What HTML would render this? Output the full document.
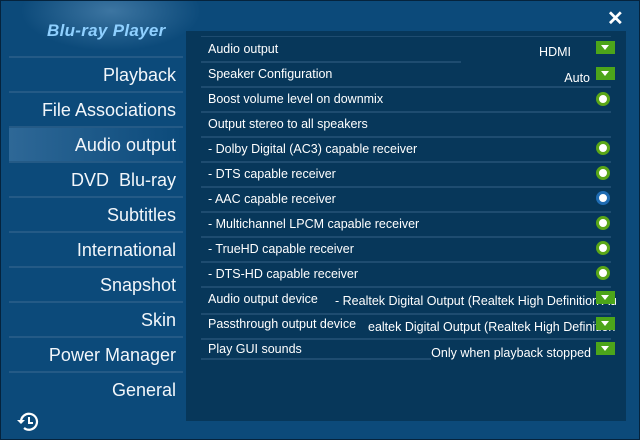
<!DOCTYPE html>
<html><head><style>
*{margin:0;padding:0;box-sizing:border-box}
body{width:640px;height:440px;background:#0c4a7a;font-family:"Liberation Sans",sans-serif;color:#fff;position:relative;overflow:hidden}
.win{position:absolute;left:0;top:0;width:640px;height:440px;border:1px solid #05233d;background:radial-gradient(ellipse 90px 40px at 110px 10px,rgba(120,170,210,.45),transparent),#0c4a7a}
.logo{position:absolute;left:46px;top:20px;font-size:17px;font-style:italic;font-weight:bold;color:#8fd0ff;letter-spacing:.3px}
.nav{position:absolute;left:8px;top:55px;width:174px}
.nav div{height:35px;border-top:2px solid #245a86;text-align:right;padding-right:7px;font-size:18px;line-height:34px;color:#f2f6fa}
.nav div.sel{background:linear-gradient(90deg,rgba(110,160,205,.35),rgba(60,120,170,.15) 75%,rgba(12,74,122,0))}
.panel{position:absolute;left:185px;top:30px;width:440px;height:390px;background:#07375a}
.row{position:absolute;left:15px;width:410px;height:25px;font-size:12.5px;line-height:22px;color:#fff}
.row .l{position:absolute;left:7px;top:0}
.row .r{position:absolute;right:40px;top:2px}
.sep{position:absolute;left:15px;width:410px;height:2px;background:#1e4c70}
.rad{position:absolute;left:410px;width:14px;height:14px;border-radius:50%;background:#fff;border:3px solid #5aa617}
.rad.b{border-color:#1f6cb3}
.dd{position:absolute;left:410px;width:19px;height:13px;background:#4ca51a}
.dd:after{content:"";position:absolute;left:5px;top:4px;border-left:4.5px solid transparent;border-right:4.5px solid transparent;border-top:5px solid #fff}
.close{position:absolute;left:606px;top:5px;font-size:20px;color:#fff;font-weight:bold}
</style></head><body><div class="win">
<div class="logo">Blu-ray Player</div>
<div class="close">✕</div>
<div class="nav">
<div>Playback</div><div>File Associations</div><div class="sel">Audio output</div><div>DVD&nbsp; Blu-ray</div><div>Subtitles</div><div>International</div><div>Snapshot</div><div>Skin</div><div>Power Manager</div><div>General</div>
</div>
<svg style="position:absolute;left:14px;top:409px" width="26" height="24" viewBox="0 0 26 24"><path d="M6 12a8 8 0 1 1 3 6" fill="none" stroke="#fff" stroke-width="2.2"/><path d="M2 10l4 4 4-4z" fill="#fff"/><path d="M14 7v6h4" fill="none" stroke="#fff" stroke-width="2"/></svg>
<div class="panel">
<div class="sep" style="top:5px;height:1px"></div>
<div class="row" style="top:7px"><span class="l">Audio output</span><span class="r" style="right:40px;top:3px">HDMI</span></div>
<div class="dd" style="top:10px"></div>
<div class="sep" style="top:30px;width:260px;left:15px"></div>
<div class="row" style="top:32px"><span class="l">Speaker Configuration</span><span class="r" style="right:21px;top:4px">Auto</span></div>
<div class="dd" style="top:36px"></div>
<div class="sep" style="top:55px"></div>
<div class="row" style="top:57px"><span class="l">Boost volume level on downmix</span></div>
<div class="rad" style="top:61px"></div>
<div class="sep" style="top:80px"></div>
<div class="row" style="top:82px"><span class="l">Output stereo to all speakers</span></div>
<div class="sep" style="top:105px"></div>
<div class="row" style="top:107px"><span class="l">- Dolby Digital (AC3) capable receiver</span></div>
<div class="rad" style="top:110px"></div>
<div class="sep" style="top:130px"></div>
<div class="row" style="top:132px"><span class="l">- DTS capable receiver</span></div>
<div class="rad" style="top:135px"></div>
<div class="sep" style="top:155px"></div>
<div class="row" style="top:157px"><span class="l">- AAC capable receiver</span></div>
<div class="rad b" style="top:160px"></div>
<div class="sep" style="top:180px"></div>
<div class="row" style="top:182px"><span class="l">- Multichannel LPCM capable receiver</span></div>
<div class="rad" style="top:185px"></div>
<div class="sep" style="top:205px"></div>
<div class="row" style="top:207px"><span class="l">- TrueHD capable receiver</span></div>
<div class="rad" style="top:210px"></div>
<div class="sep" style="top:230px"></div>
<div class="row" style="top:232px"><span class="l">- DTS-HD capable receiver</span></div>
<div class="rad" style="top:235px"></div>
<div class="sep" style="top:255px"></div>
<div class="row" style="top:257px;overflow:hidden;width:415px"><span class="l">Audio output device</span><span class="l" style="left:134px;top:2px;white-space:nowrap">- Realtek Digital Output (Realtek High Definition Audio)</span></div>
<div class="dd" style="top:260px"></div>
<div class="sep" style="top:282px"></div>
<div class="row" style="top:282px;overflow:hidden;width:415px"><span class="l">Passthrough output device</span><span class="l" style="left:167px;top:3px;white-space:nowrap">ealtek Digital Output (Realtek High Definition Audio)</span></div>
<div class="dd" style="top:286px"></div>
<div class="sep" style="top:307px"></div>
<div class="row" style="top:307px"><span class="l">Play GUI sounds</span><span class="r" style="right:20px;top:4px">Only when playback stopped</span></div>
<div class="dd" style="top:311px"></div>
<div class="sep" style="top:327px;width:230px"></div>
</div>
</div></body></html>
